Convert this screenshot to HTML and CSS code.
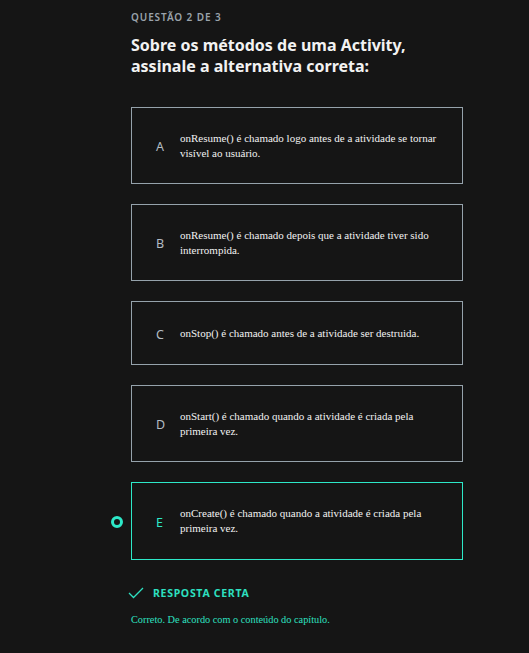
FILE: index.html
```html
<!DOCTYPE html>
<html>
<head>
<meta charset="utf-8">
<link rel="stylesheet" href="styles.css">
</head>
<body>
<div class="wrap">
  <div class="eyebrow">QUESTÃO 2 DE 3</div>
  <h1 class="title">Sobre os métodos de uma Activity, assinale a alternativa correta:</h1>
  <div class="options">
    <div class="opt"><span class="letter">A</span><span class="txt">onResume() é chamado logo antes de a atividade se tornar visível ao usuário.</span></div>
    <div class="opt"><span class="letter">B</span><span class="txt">onResume() é chamado depois que a atividade tiver sido interrompida.</span></div>
    <div class="opt short"><span class="letter">C</span><span class="txt">onStop() é chamado antes de a atividade ser destruida.</span></div>
    <div class="opt"><span class="letter">D</span><span class="txt">onStart() é chamado quando a atividade é criada pela primeira vez.</span></div>
    <div class="opt selected"><span class="mark"></span><span class="letter">E</span><span class="txt">onCreate() é chamado quando a atividade é criada pela primeira vez.</span></div>
  </div>
  <div class="result">
    <svg class="check" width="16" height="12" viewBox="0 0 16 12"><path d="M1 6 L5.5 10.5 L15 1" fill="none" stroke="#2de0c0" stroke-width="1.3"/></svg>
    <span>RESPOSTA CERTA</span>
  </div>
  <p class="feedback">Correto. De acordo com o conteúdo do capítulo.</p>
</div>
</body>
</html>
```
FILE: styles.css
```css
html, body { margin: 0; padding: 0; background: #151515; }
body { width: 529px; height: 653px; overflow: hidden; }
.wrap { margin-left: 131px; width: 332px; padding-top: 11px; }
.eyebrow { font-family: "Noto Sans", sans-serif; font-size: 10px; font-weight: 600; color: #9aa3ab; letter-spacing: 0.9px; line-height: 13px; }
.title { margin: 11px 0 0; font-family: "Noto Sans", sans-serif; font-size: 16px; font-weight: 700; line-height: 21px; color: #f2f2f2; width: 300px; }
.options { margin-top: 30px; display: flex; flex-direction: column; gap: 20px; }
.opt { position: relative; box-sizing: border-box; height: 77px; border: 1px solid #95a2ab; display: flex; align-items: center; padding-left: 24px; padding-right: 10px; }
.opt.short { height: 64px; }
.opt.selected { border-color: #2de8c8; height: 78px; }
.letter { width: 24px; font-family: "Noto Sans", sans-serif; font-size: 12.5px; color: #b3bcc3; flex: none; padding-top: 2px; }
.selected .letter { color: #2de8c8; }
.txt { font-family: "Liberation Serif", serif; font-size: 11px; line-height: 15px; color: #f2f2f2; }
.mark { position: absolute; left: -21px; top: 33px; width: 6px; height: 6px; border: 3.5px solid #2de8c8; border-radius: 50%; }
.result { margin-top: 26px; display: flex; align-items: center; gap: 9px; margin-left: -3px; }
.result span { font-family: "Noto Sans", sans-serif; font-weight: 700; font-size: 10.5px; letter-spacing: 0.7px; color: #2de0c0; }
.feedback { margin: 14px 0 0; font-family: "Liberation Serif", serif; font-size: 10.3px; color: #2de0c0; }
```
